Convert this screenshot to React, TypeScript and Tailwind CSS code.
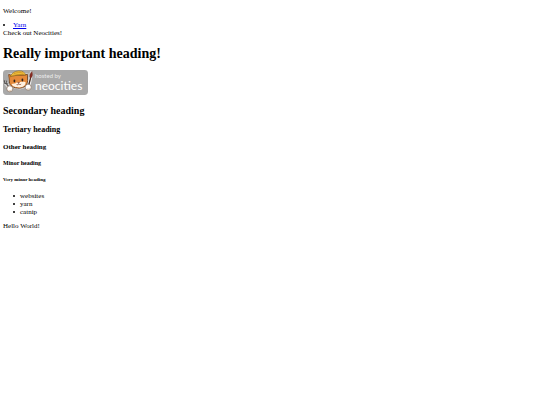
const items = ["websites", "yarn", "catnip"];

// "Hosted by Neocities" badge with the painter cat
function NeocitiesBadge() {
  return (
    <svg
      viewBox="0 0 85 25"
      className="block h-[25px] w-[85px]"
      role="img"
      aria-label="Hosted by Neocities"
    >
      <rect width="85" height="25" rx="3.4" fill="#a9a9a9" />

      {/* Fork */}
      <path d="M2.4 12.8L7 18.5" stroke="#d8d8d8" strokeWidth="3.6" strokeLinecap="round" />
      <path d="M1.4 10.4l.4 3 3 .3M3.4 10.6l-.2 2.4M3.2 13.6l4 4.8" stroke="#565454" strokeWidth="1.1" fill="none" />

      {/* Brush */}
      <path d="M28.4 3L26 15" stroke="#ececec" strokeWidth="3.4" strokeLinecap="round" />
      <path d="M27.6 8L25.7 15" stroke="#493023" strokeWidth="1.3" />
      <path d="M29 1.4c-2 1.6-3 4.4-1.8 7 2.2-1 3-4.2 1.8-7z" fill="#8b2c22" stroke="#49251e" strokeWidth="0.4" />

      {/* Head with ears */}
      <path
        d="M4.8 3.8l5-.6C12.6.6 19.6.2 22.4 3.2l3 .4-.2 7.6c-.6 5.4-4.4 8-9 8-5.6 0-10-3-10.4-7.4z"
        fill="#ededed"
      />
      <path
        d="M5.6 4.4l4.4 1.2 12-.8 2.4-.6.2 6.4c0 4.8-3.8 7.6-8.4 7.6-5.4 0-9.6-2.2-9.8-6.2z"
        fill="#e58a3a"
        stroke="#5d3517"
        strokeWidth="0.8"
      />
      <path d="M8.6 14c2-.6 3.8 0 5.4-1.8 2 1 4.8-1.2 8.6 0 0 3.4-2.8 5.2-6.2 5.2-4 0-7.2-1-7.8-3.4z" fill="#fff1df" />
      <ellipse cx="11.4" cy="11" rx="0.9" ry="1.4" fill="#2e211b" />
      <ellipse cx="19.4" cy="10" rx="0.9" ry="1.4" fill="#2e211b" />
      <path d="M14.6 12.6l1.9-.2-.8 1.1zM13.4 14.6c1.2.9 2.1.2 2.3-.9.4.9 1.6 1.3 2.5.2" fill="#8c3b2a" stroke="#713522" strokeWidth="0.4" />

      {/* Cap */}
      <path
        d="M7.4 6.8C8.4 3 11.6 1.2 15.6.9c4.2-.2 6.6 1.4 7 4.4-5.2-1-10.2 0-15.2 1.5z"
        fill="#f0c13c"
        stroke="#80591b"
        strokeWidth="0.6"
      />
      <path d="M10.6 3.9c3-1.6 6.8-1.8 9.6-.7M9 5.7c4.2-1 8.4-1.6 12.4-1.1" stroke="#b8791f" strokeWidth="0.5" fill="none" />

      {/* Paws */}
      <circle cx="6.8" cy="18.8" r="3" fill="#ffffff" stroke="#6f4b31" strokeWidth="0.5" />
      <circle cx="25.2" cy="17.2" r="3" fill="#ffffff" stroke="#6f4b31" strokeWidth="0.5" />
      <path d="M5.6 20.4c.9.5 2 .3 2.7-.5M24.2 18.9c1 .3 1.9.1 2.5-.6" stroke="#d4a26f" strokeWidth="0.6" fill="none" />

      <text x="32" y="8" fontFamily="Lato, sans-serif" fontSize="6" fill="#ececec">
        hosted by
      </text>
      <text x="32" y="20" fontFamily="Lato, sans-serif" fontSize="12" fill="#ffffff">
        neocities
      </text>
    </svg>
  );
}

export default function App() {
  return (
    <main className="bg-white px-[3px] py-[7px] font-['Liberation_Serif',serif] text-[7px] leading-[8px] text-black">
      <p>Welcome!</p>

      <ul className="mt-1.5 list-inside list-disc">
        <li>
          <a href="#yarn" className="text-[#0000ee] underline">
            Yarn
          </a>
        </li>
      </ul>
      <p>Check out Neocities!</p>

      <h1 className="mt-[9px] text-[14px] leading-[16px] font-bold">
        Really important heading!
      </h1>

      <div className="mt-2">
        <NeocitiesBadge />
      </div>

      <h2 className="mt-[10px] text-[10px] leading-[12px] font-bold">
        Secondary heading
      </h2>
      <h3 className="mt-2 text-[8px] leading-[10px] font-bold">
        Tertiary heading
      </h3>
      <h4 className="mt-2 font-bold">Other heading</h4>
      <h5 className="mt-2 text-[6px] font-bold">Minor heading</h5>
      <h6 className="mt-[9px] text-[5px] font-bold">Very minor heading</h6>

      <ul className="mt-2 pl-[10px]">
        {items.map((item) => (
          <li
            key={item}
            className="flex items-center before:mr-[5px] before:size-[2px] before:rounded-full before:bg-black"
          >
            {item}
          </li>
        ))}
      </ul>

      <p className="mt-1.5">Hello World!</p>
    </main>
  );
}
